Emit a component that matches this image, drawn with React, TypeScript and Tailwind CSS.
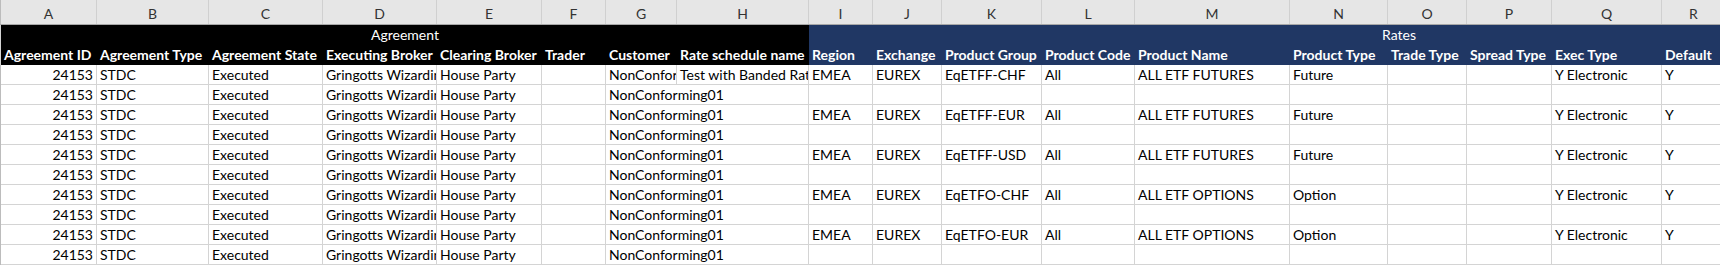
import React from "react";

// ── COLUMN LAYOUT ─────────────────────────────────────────────
// Widths measured off the sheet; class names written out in full.
type Col = { key: string; w: string; label: string; band: "agr" | "rates" };

const cols: Col[] = [
  { key: "A", w: "w-[96px]", label: "Agreement ID", band: "agr" },
  { key: "B", w: "w-[112px]", label: "Agreement Type", band: "agr" },
  { key: "C", w: "w-[114px]", label: "Agreement State", band: "agr" },
  { key: "D", w: "w-[114px]", label: "Executing Broker", band: "agr" },
  { key: "E", w: "w-[105px]", label: "Clearing Broker", band: "agr" },
  { key: "F", w: "w-[64px]", label: "Trader", band: "agr" },
  { key: "G", w: "w-[71px]", label: "Customer", band: "agr" },
  { key: "H", w: "w-[132px]", label: "Rate schedule name", band: "agr" },
  { key: "I", w: "w-[64px]", label: "Region", band: "rates" },
  { key: "J", w: "w-[69px]", label: "Exchange", band: "rates" },
  { key: "K", w: "w-[100px]", label: "Product Group", band: "rates" },
  { key: "L", w: "w-[93px]", label: "Product Code", band: "rates" },
  { key: "M", w: "w-[155px]", label: "Product Name", band: "rates" },
  { key: "N", w: "w-[98px]", label: "Product Type", band: "rates" },
  { key: "O", w: "w-[79px]", label: "Trade Type", band: "rates" },
  { key: "P", w: "w-[85px]", label: "Spread Type", band: "rates" },
  { key: "Q", w: "w-[110px]", label: "Exec Type", band: "rates" },
  { key: "R", w: "w-[64px]", label: "Default", band: "rates" },
  { key: "S", w: "w-[64px]", label: "", band: "rates" },
];

// ── DATA ──────────────────────────────────────────────────────
const base = ["24153", "STDC", "Executed", "Gringotts Wizarding Bank", "House Party", "", "NonConforming01"];

const rateRows: (string[] | null)[] = [
  ["Test with Banded Rates", "EMEA", "EUREX", "EqETFF-CHF", "All", "ALL ETF FUTURES", "Future", "", "", "Y Electronic", "Y"],
  null,
  ["", "EMEA", "EUREX", "EqETFF-EUR", "All", "ALL ETF FUTURES", "Future", "", "", "Y Electronic", "Y"],
  null,
  ["", "EMEA", "EUREX", "EqETFF-USD", "All", "ALL ETF FUTURES", "Future", "", "", "Y Electronic", "Y"],
  null,
  ["", "EMEA", "EUREX", "EqETFO-CHF", "All", "ALL ETF OPTIONS", "Option", "", "", "Y Electronic", "Y"],
  null,
  ["", "EMEA", "EUREX", "EqETFO-EUR", "All", "ALL ETF OPTIONS", "Option", "", "", "Y Electronic", "Y"],
  null,
];

const rows = rateRows.map((r) => [...base, ...(r ?? Array(11).fill("")), ""]);

export default function App() {
  return (
    <div className="w-[1720px] h-[267px] overflow-hidden bg-white text-[14px] leading-none text-black font-['Lato','Liberation_Sans',sans-serif]">
      <div className="w-[2000px]">

        {/* ── COLUMN LETTERS ─────────────────────────────── */}
        <div className="flex h-[25px] bg-[#e6e6e6] border-b border-[#a8a8a8]">
          <div className="w-[1px] shrink-0 bg-[#bcbcbc]" />
          {cols.map((c) => (
            <div
              key={c.key}
              className={`${c.w} shrink-0 flex items-center justify-center text-[#333] text-[14px] pt-[3px] border-r border-[#d0d0d0]`}
            >
              {c.key}
            </div>
          ))}
        </div>

        {/* ── GROUP BAND ─────────────────────────────────── */}
        <div className="flex h-[20px] text-white">
          <div className="w-[1px] shrink-0 bg-[#d4d4d4]" />
          <div className="w-[808px] shrink-0 bg-black flex items-center justify-center">Agreement</div>
          <div className="w-[1180px] shrink-0 bg-[#203764] flex items-center justify-center">Rates</div>
        </div>

        {/* ── COLUMN TITLES ──────────────────────────────── */}
        <div className="flex h-[20px] text-white font-bold">
          <div className="w-[1px] shrink-0 bg-[#d4d4d4]" />
          {cols.map((c) => (
            <div
              key={c.key}
              className={`${c.w} shrink-0 flex items-center px-[3px] whitespace-nowrap overflow-hidden ${
                c.band === "agr" ? "bg-black" : "bg-[#203764]"
              }`}
            >
              {c.label}
            </div>
          ))}
        </div>

        {/* ── DATA ROWS ──────────────────────────────────── */}
        {rows.map((row, ri) => (
          <div key={ri} className="flex h-[20px]">
            <div className="w-[1px] shrink-0 bg-[#bcbcbc]" />
            {cols.map((c, ci) => {
              const val = row[ci] ?? "";
              const next = row[ci + 1] ?? "";
              const spill = val !== "" && next === "" && ci === 6;
              return (
                <div
                  key={c.key}
                  className={`${c.w} shrink-0 flex items-center whitespace-nowrap border-b border-[#d4d4d4] px-[3px] pt-[1px] ${
                    spill ? "overflow-visible border-r-0 pr-0" : "overflow-hidden border-r border-r-[#d4d4d4]"
                  } ${ci === 0 ? "justify-end" : ""} ${spill ? "mr-0" : ""}`}
                >
                  {val}
                </div>
              );
            })}
          </div>
        ))}
      </div>
    </div>
  );
}
